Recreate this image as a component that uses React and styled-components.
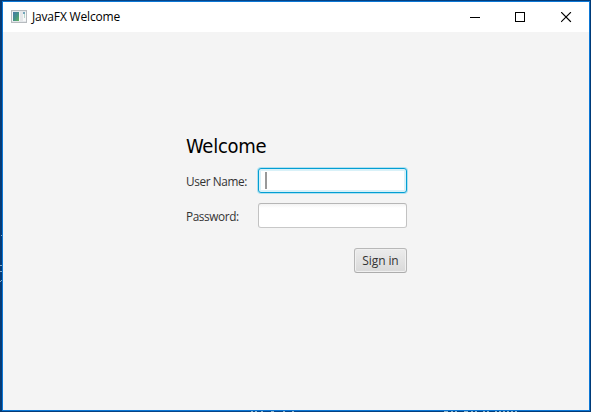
import React from "react";
import styled, { createGlobalStyle } from "styled-components";

const GlobalStyle = createGlobalStyle`
  * { box-sizing: border-box; }
  html, body { margin: 0; overflow: hidden; }
  body { font-family: "Open Sans", "Noto Sans", sans-serif; }
`;

const Desktop = styled.div`
  position: relative;
  width: 591px;
  height: 412px;
  padding: 1px 1px 1px 2px;
  background: linear-gradient(90deg, #063a75, #07468b 30%, #003a78);
`;

const Window = styled.main`
  display: flex;
  flex-direction: column;
  height: 410px;
  border: 1px solid #0c77d5;
  background: #f4f4f4;
`;

const TitleBar = styled.header`
  display: flex;
  align-items: center;
  flex: 0 0 30px;
  padding-left: 8px;
  background: #fff;
`;

const Title = styled.h1`
  flex: 1;
  margin: 0 0 0 5px;
  font-size: 12px;
  line-height: 16px;
  font-weight: 400;
  letter-spacing: -0.17px;
  color: #000;
`;

const Controls = styled.div`
  display: flex;
  height: 30px;
`;

const ControlButton = styled.button`
  width: ${(p) => p.$width || 45}px;
  height: 30px;
  padding: 0;
  border: 0;
  background: transparent;
  display: flex;
  align-items: center;
  justify-content: center;
`;

const Content = styled.section`
  flex: 1;
  padding: 101px 0 0 183px;
`;

const Form = styled.form`
  display: grid;
  grid-template-columns: 72px 149px;
  grid-template-rows: 25px 25px 25px 25px;
  row-gap: 10px;
  align-items: center;
`;

const Heading = styled.h2`
  grid-column: 1 / 3;
  margin: 0;
  padding-top: 2px;
  font-family: "DejaVu Sans Condensed", "DejaVu Sans", "Open Sans", sans-serif;
  font-stretch: condensed;
  font-size: 20px;
  line-height: 25px;
  font-weight: 400;
  letter-spacing: ${(p) => p.$tracking}px;
  color: #000;
`;

const Label = styled.label`
  font-size: 11.8px;
  line-height: 16px;
  letter-spacing: ${(p) => p.$tracking}px;
  white-space: nowrap;
  color: #333;
`;

const Field = styled.div`
  display: flex;
  align-items: center;
  height: 25px;
  padding-left: 6px;
  border: 1px solid;
  border-radius: 3px;
  border-color: ${(p) => (p.$focused ? "#039ed3" : "#b6b6b6 #c2c2c2 #c8c8c8")};
  background: ${(p) => (p.$focused ? "#fff" : "linear-gradient(#f3f3f3, #fff 4px)")};
  box-shadow: ${(p) => (p.$focused ? "0 0 0 1px #b0e1f0, inset 0 0 0 2px #d9f1f8" : "none")};
`;

const Caret = styled.span`
  width: 2px;
  height: 17px;
  background: #999;
`;

const Actions = styled.div`
  grid-column: 1 / 3;
  display: flex;
  justify-content: flex-end;
  margin-top: 20px;
`;

const SignIn = styled.button`
  width: 53px;
  height: 25px;
  padding: 1px 0 0;
  border: 1px solid;
  border-color: #b8b8b8 #b6b6b6 #acacac;
  border-radius: 3px;
  background: linear-gradient(#ececec, #d9d9d9);
  box-shadow: inset 0 0 0 1px #f0f0f0;
  font: 12px/16px "Open Sans", "Noto Sans", sans-serif;
  letter-spacing: -0.1px;
  color: #333;
`;

const DesktopTraces = styled.svg`
  position: absolute;
  inset: 0;
  pointer-events: none;
`;

function AppIcon() {
  return (
    <svg width="16" height="14" viewBox="0 0 16 14" shapeRendering="crispEdges" aria-hidden="true">
      <defs>
        <linearGradient id="screen" x1="0" y1="0" x2="1" y2="1">
          <stop stopColor="#4778a8" />
          <stop offset=".55" stopColor="#459386" />
          <stop offset="1" stopColor="#69b45e" />
        </linearGradient>
      </defs>
      <path fill="#b7bbbf" d="M0 0h16v13H0z" />
      <path fill="#e4e8eb" d="M1 1h14v11H1z" />
      <path fill="#f7f8f9" d="M1 2h14v9H1z" />
      <path fill="url(#screen)" d="M2 2h6v9H2z" />
      <path fill="#e5e7e9" d="M9 2h3v9H9z" />
      <path fill="#73a6bb" d="M12 2h2v2h-2z" />
      <path fill="#b7d7cc" d="M13 4h1v4h-1z" />
    </svg>
  );
}

export default function App() {
  return (
    <>
      <GlobalStyle />
      <Desktop>
        <Window>
          <TitleBar>
            <AppIcon />
            <Title>JavaFX Welcome</Title>
            <Controls>
              <ControlButton aria-label="Minimize">
                <svg width="11" height="11" shapeRendering="crispEdges"><path d="M0 5h10v1H0z" /></svg>
              </ControlButton>
              <ControlButton aria-label="Maximize">
                <svg width="11" height="11" shapeRendering="crispEdges"><path d="M.5.5h9v9h-9z" fill="none" stroke="#000" /></svg>
              </ControlButton>
              <ControlButton aria-label="Close" $width={46}>
                <svg width="11" height="11"><path d="M.5.5l9 9M9.5.5l-9 9" stroke="#000" strokeWidth="1.1" strokeLinecap="square" /></svg>
              </ControlButton>
            </Controls>
          </TitleBar>
          <Content>
            <Form onSubmit={(e) => e.preventDefault()}>
              <Heading $tracking={-0.25}>Welcome</Heading>
              <Label $tracking={-0.38}>User Name:</Label>
              <Field $focused><Caret /></Field>
              <Label $tracking={-0.4}>Password:</Label>
              <Field />
              <Actions><SignIn>Sign in</SignIn></Actions>
            </Form>
          </Content>
        </Window>
        <DesktopTraces width="591" height="412" shapeRendering="crispEdges" aria-hidden="true">
          <path stroke="#86a9c4" d="M1 235.5h1M0 265.5h2M0 271.5h2M0 281.5h1M1 280.5h1" />
          <path stroke="#91b5c9" d="M251 411.5h2M255 411.5h2M261 411.5h2M271 411.5h3M283 411.5h2M292 411.5h2M444 411.5h4M451 411.5h2M455 411.5h2M464 411.5h4M471 411.5h2M475 411.5h2M483 411.5h2M487 411.5h2M495 411.5h2M499 411.5h2M503 411.5h2M507 411.5h2M511 411.5h2M515 411.5h2" />
        </DesktopTraces>
      </Desktop>
    </>
  );
}
